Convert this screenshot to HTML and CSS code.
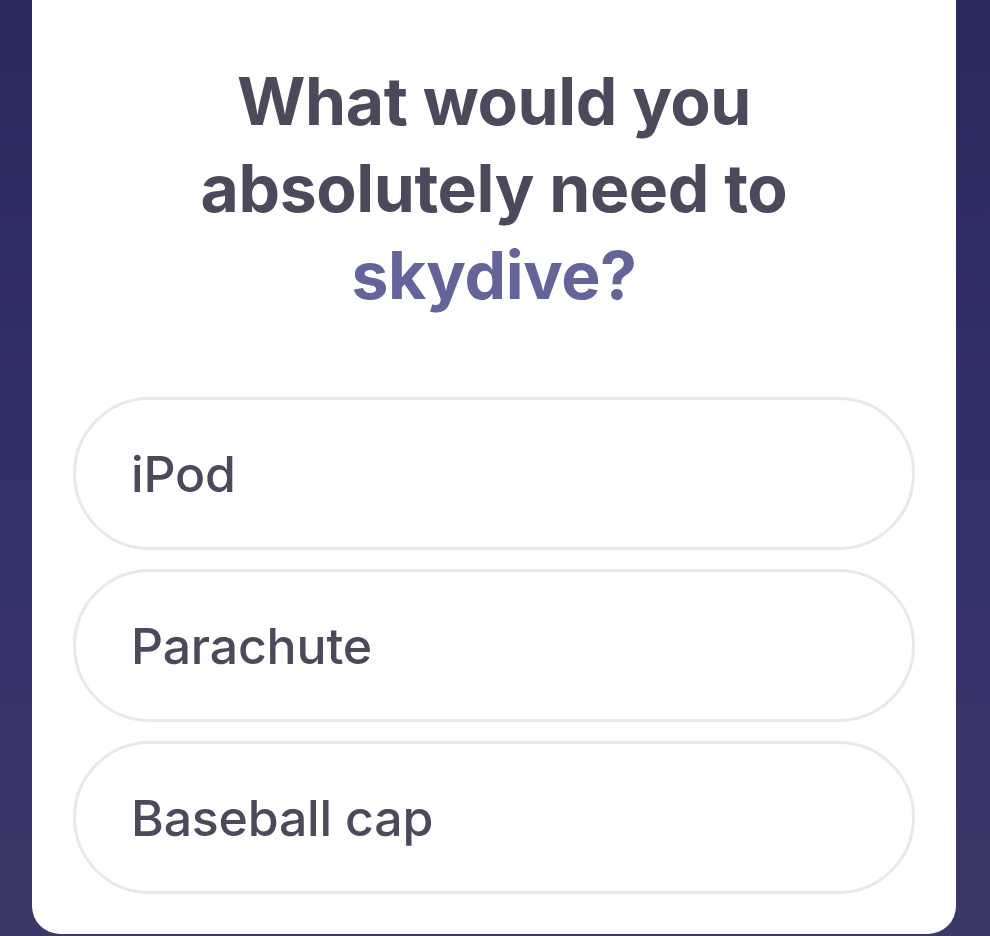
FILE: index.html
```html
<!DOCTYPE html>
<html>
<head>
<meta charset="utf-8">
<link rel="stylesheet" href="styles.css">
</head>
<body>
<div class="screen">
  <div class="card">
    <h1 class="question">What would you<br>absolutely need to<br><span class="accent">skydive?</span></h1>
    <div class="options">
      <div class="option">iPod</div>
      <div class="option">Parachute</div>
      <div class="option">Baseball cap</div>
    </div>
  </div>
</div>
</body>
</html>
```
FILE: styles.css
```css
html, body {
  margin: 0;
  padding: 0;
  height: 100%;
}
body {
  background: linear-gradient(180deg, #2b2a5e 0%, #33316a 60%, #3b3968 100%);
  font-family: Inter, "Noto Sans", sans-serif;
  overflow: hidden;
}
.screen {
  padding: 0 34px 2px 32px;
  height: 936px;
  box-sizing: border-box;
}
.card {
  background: #ffffff;
  height: 934px;
  border-radius: 0 0 28px 28px;
  box-sizing: border-box;
  padding-top: 58px;
}
.question {
  margin: 0 0 78px;
  text-align: center;
  font-size: 66px;
  line-height: 87px;
  font-weight: 700;
  color: #4a4a5c;
  letter-spacing: -0.4px;
}
.accent {
  color: #64649a;
}
.options {
  display: flex;
  flex-direction: column;
  gap: 19px;
  padding: 0 41px;
}
.option {
  height: 153px;
  box-sizing: border-box;
  border: 3px solid #e9e9eb;
  border-radius: 77px;
  display: flex;
  align-items: center;
  padding-left: 55px;
  font-size: 50px;
  font-weight: 500;
  color: #4a4a5c;
  letter-spacing: -0.2px;
}
```
